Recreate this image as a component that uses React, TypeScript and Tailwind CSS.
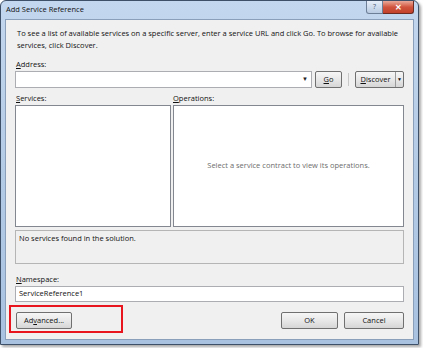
import React from "react";

const font = { fontFamily: '"Open Sans", "Liberation Sans", sans-serif' };

function Btn({ children, className = "" }: { children: React.ReactNode; className?: string }) {
  return (
    <div
      className={
        "flex items-center justify-center rounded-[2px] border border-[#707070] bg-gradient-to-b from-[#f6f6f6] via-[#e8e8e8] to-[#d6d6d6] text-[7.5px] text-[#111] " +
        className
      }
    >
      {children}
    </div>
  );
}

export default function App() {
  return (
    <div className="relative h-[348px] w-[423px] overflow-hidden bg-white" style={font}>
      {/* window frame */}
      <div className="flex h-[345px] w-[419px] flex-col rounded-t-[6px] border border-[#3d5068] bg-gradient-to-b from-[#c3d7ee] via-[#b4cbe6] to-[#a8c2e0] shadow-[2px_2px_3px_rgba(0,0,0,0.35)]">
        {/* title bar */}
        <div className="flex h-[18px] items-start justify-between pl-[5px] pr-[4px]">
          <span className="pt-[3px] text-[7.5px] text-[#111]">Add Service Reference</span>
          <div className="flex">
            <div className="flex h-[13px] w-[17px] items-center justify-center rounded-bl-[3px] border border-t-0 border-[#6d7f96] bg-gradient-to-b from-[#e6eef8] to-[#b9cbe2] text-[7px] text-[#4a5a70]">
              ?
            </div>
            <div className="flex h-[13px] w-[31px] items-center justify-center rounded-br-[3px] border border-l-0 border-t-0 border-[#6b2a22] bg-gradient-to-b from-[#e9a99a] via-[#d0553e] to-[#c2402a] text-[8px] font-bold text-white">
              ✕
            </div>
          </div>
        </div>

        {/* client area */}
        <div className="mx-[4px] mb-[4px] flex flex-1 flex-col border border-[#8a9fba] bg-[#f0f0f0] px-[9px] text-[7.5px] text-[#111]">
          <p className="mt-[7px] pl-[2px] leading-[12px]">
            To see a list of available services on a specific server, enter a service URL and click Go. To browse for available services, click Discover.
          </p>

          <div className="mt-[7px] pl-[1px] leading-[12px]">
            <u>A</u>ddress:
          </div>
          <div className="mt-px flex h-[17px] items-center">
            <div className="flex h-[17px] w-[297px] items-center justify-end border border-[#abadb3] bg-white pr-[3px]">
              <span className="text-[6px] text-[#222]">▼</span>
            </div>
            <Btn className="ml-[3px] h-[17px] w-[27px]">
              <u>G</u>o
            </Btn>
            <div className="mx-[6px] h-[13px] w-px bg-[#c8c8c8]" />
            <Btn className="h-[17px] w-[49px] justify-start">
              <span className="flex-1 text-center">
                <u>D</u>iscover
              </span>
              <span className="flex h-full w-[8px] items-center justify-center border-l border-[#9a9a9a] text-[5px]">▼</span>
            </Btn>
          </div>

          <div className="mt-[4px] flex leading-[12px]">
            <span className="w-[158px] pl-[1px]">
              <u>S</u>ervices:
            </span>
            <span>
              <u>O</u>perations:
            </span>
          </div>
          <div className="mt-px flex h-[122px] gap-[2px]">
            <div className="w-[156px] border border-[#828790] bg-white" />
            <div className="flex flex-1 items-center justify-center border border-[#828790] bg-white text-[#6d6d6d]">
              Select a service contract to view its operations.
            </div>
          </div>

          <div className="mt-[3px] h-[34px] border border-[#b5b5b5] bg-[#f0f0f0] px-[3px] pt-[1px] leading-[12px]">
            No services found in the solution.
          </div>

          <div className="mt-[9px] pl-[1px] leading-[12px]">
            <u>N</u>amespace:
          </div>
          <div className="mt-px flex h-[16px] items-center border border-[#abadb3] bg-white pl-[3px]">ServiceReference1</div>

          <div className="mt-[10px] flex items-center">
            <Btn className="ml-px h-[17px] w-[56px]">
              Ad<u>v</u>anced...
            </Btn>
            <div className="flex-1" />
            <Btn className="h-[17px] w-[57px] border-[#3c7fb1] from-[#eaf6fd] via-[#d9f0fc] to-[#bee6fd]">OK</Btn>
            <Btn className="ml-[6px] h-[17px] w-[60px]">Cancel</Btn>
          </div>
        </div>
      </div>

      {/* red annotation box */}
      <div className="absolute left-[9px] top-[305px] h-[28px] w-[114px] border-2 border-[#e8141e]" />
    </div>
  );
}
